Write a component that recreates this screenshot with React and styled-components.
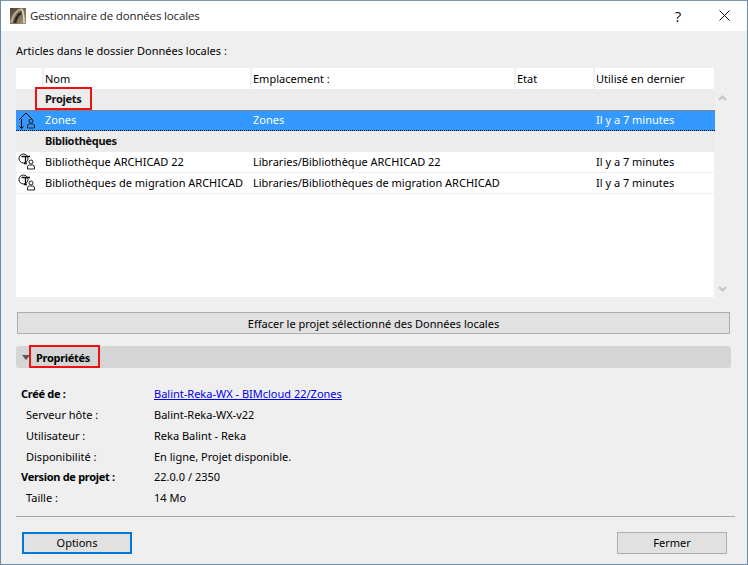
import React from 'react';
import styled, { createGlobalStyle } from 'styled-components';

const Global = createGlobalStyle`
  html, body { margin: 0; padding: 0; background: #efefef; }
  * { box-sizing: border-box; }
  svg { display: block; }
`;
const Win = styled.div`
  width: 748px; height: 565px; display: flex; flex-direction: column; position: relative; overflow: hidden;
  background: #efefef; border: 1px solid #6d8aa5; border-width: 0 1px 1px 1px;
  font-family: Tahoma, "Noto Sans", "DejaVu Sans", sans-serif; font-size: 11px; color: #000;
`;
const TitleBar = styled.div`
  height: 31px; flex: none; background: #fff; display: flex; align-items: center; padding: 0 0 1px 9px;
  border-top: 1px solid #7a95ad;
`;
const TitleText = styled.span`
  font-family: "Open Sans", sans-serif; font-size: 11.5px; margin-left: 4px; color: #222; flex: 1; letter-spacing: -0.15px; padding-bottom: 1px;
`;
const TitleBtn = styled.div`
  width: 46px; height: 28px; display: flex; align-items: center; justify-content: center; font-size: 15px;
  font-family: "Open Sans", sans-serif; color: #111;
`;
const Body = styled.div`
  flex: 1; display: flex; flex-direction: column; padding: 0 15px 0 15px; min-height: 0;
`;
const Caption = styled.div`
  height: 37px; flex: none; line-height: 40px;
`;
const TableRow = styled.div`display: flex; flex: none; height: 229px;`;
const Table = styled.div`width: 698px; background: #fff; display: flex; flex-direction: column; position: relative;`;
const cols = '26px 208px 264px 79px 1fr';
const Head = styled.div`
  height: 21px; display: grid; grid-template-columns: ${cols}; flex: none;
`;
const HeadCell = styled.div`
  border-left: ${p => (p.$first ? 'none' : '2px solid #efefef')}; padding-left: 1px; line-height: 21px; white-space: nowrap;
`;
const Group = styled.div`
  height: 21px; background: #ececec; font-weight: 700; padding-left: 29px; line-height: 19px; flex: none;
  color: #111; letter-spacing: -0.3px;
`;
const Row = styled.div`
  height: 21px; display: grid; grid-template-columns: ${cols}; flex: none; line-height: 20px; white-space: nowrap;
  background: ${p => (p.$sel ? '#3399ff' : '#fff')}; color: ${p => (p.$sel ? '#fff' : '#000')};
  border-bottom: ${p => (p.$sel ? '1px dotted #000' : '1px solid #efefef')};
  border-top: ${p => (p.$sel ? '1px dotted #c8641e' : 'none')};
  ${p => p.$sel && 'width: 699px; line-height: 17px;'}
`;
const IconCell = styled.div`padding: 1px 0 0 2px; height: 20px; ${p => p.$sel && 'margin-top: -1px;'}`;
const Cell = styled.div`padding-left: 3px; overflow: hidden;`;
const Scroll = styled.div`
  width: 16px; display: flex; flex-direction: column; justify-content: space-between; align-items: center; padding: 27px 0 5px;
`;
const Btn = styled.button`
  display: block; height: ${p => p.$h || 22}px; width: ${p => p.$w || 110}px; padding: 0; font: inherit; color: #000;
  background: #e1e1e1; border: ${p => (p.$focus ? '2px solid #0078d7' : '1px solid #adadad')};
`;
const WideBtn = styled(Btn)`margin: 15px 0 0 1px; font-weight: 400;`;
const PropBar = styled.div`
  margin-top: 12px; height: 22px; width: 715px; background: #d5d5d5; border-radius: 3px; display: flex; align-items: center;
  padding-left: 6px; font-weight: 700; flex: none; gap: 6px; color: #000; letter-spacing: -0.3px;
`;
const Arrow = styled.span`
  width: 0; height: 0; border-left: 4px solid transparent; border-right: 4px solid transparent; border-top: 5px solid #555;
`;
const Props = styled.div`
  margin-top: 15.3px; display: grid; grid-template-columns: 133px 1fr; grid-auto-rows: 20.8px; padding-left: 5px; align-items: center; flex: none;
`;
const PLabel = styled.div`
  padding-left: ${p => (p.$bold ? 0 : 5)}px; font-weight: ${p => (p.$bold ? 700 : 400)}; white-space: nowrap;
  letter-spacing: ${p => (p.$bold ? '-0.3px' : '0')};
`;
const PValue = styled.div`white-space: nowrap;`;
const PLink = styled.a`color: #0000ee; text-decoration: underline;`;
const Sep = styled.div`height: 1px; background: #a6a6a6; width: 719px; margin-top: 7.7px; flex: none;`;
const Footer = styled.div`
  display: flex; justify-content: space-between; padding: 15px 4px 0 6px; width: 715px;
`;
const RedBox = styled.div`
  position: absolute; border: 2px solid #ee1111; pointer-events: none;
  left: ${p => p.$x}px; top: ${p => p.$y}px; width: ${p => p.$w}px; height: ${p => p.$h}px;
`;

const Logo = () => (
  <svg width="16" height="16" viewBox="0 0 16 16">
    <defs>
      <linearGradient id="lg" x1="0" y1="0" x2="1" y2="1">
        <stop offset="0" stopColor="#4a4030" /><stop offset="1" stopColor="#a89a7c" />
      </linearGradient>
    </defs>
    <rect width="16" height="16" fill="url(#lg)" />
    <path d="M1 15C3 7 7 2 12 1" stroke="#b5aa8e" strokeWidth="2.2" fill="none" />
    <path d="M12 1C14 6 14 11 14 15" stroke="#e2dbc6" strokeWidth="1.5" fill="none" />
    <path d="M5 15C6 10 8 7 11 5" stroke="#2e271c" strokeWidth="2.5" fill="none" />
  </svg>
);
const Person = ({ dy = 0 }) => (
  <g stroke="#222" strokeWidth="1" fill="none" transform={`translate(0 ${dy})`}>
    <circle cx="13" cy="9.5" r="2" />
    <path d="M9.5 16.5v-2a2 2 0 0 1 2-2h3a2 2 0 0 1 2 2v2z" />
  </g>
);
const ProjectIcon = () => (
  <svg width="22" height="19" viewBox="0 0 22 19">
    <g stroke="#000" strokeWidth="1" fill="none">
      <path d="M1 9L8 2L14 8" />
      <path d="M3.5 8V17.5M1.5 15.5L3.5 17.5L5.5 15.5" />
    </g>
    <Person dy={0.5} />
  </svg>
);
const LibIcon = () => (
  <svg width="22" height="19" viewBox="0 0 22 19">
    <g stroke="#111" fill="none">
      <circle cx="5.5" cy="5.5" r="4.5" strokeWidth="1" />
      <path d="M3.5 3.5H12M7.5 3.5V10M6 10.5H9" strokeWidth="1.3" />
    </g>
    <Person dy={-0.5} />
  </svg>
);
const Chev = ({ up }) => (
  <svg width="9" height="6" viewBox="0 0 9 6">
    <path d={up ? 'M1 5L4.5 1.5L8 5' : 'M1 1L4.5 4.5L8 1'} stroke="#c4c4c4" strokeWidth="2" fill="none" />
  </svg>
);

const props = [
  ['Créé de :', true, 'link'],
  ['Serveur hôte :', false, 'Balint-Reka-WX-v22'],
  ['Utilisateur :', false, 'Reka Balint - Reka'],
  ['Disponibilité :', false, 'En ligne, Projet disponible.'],
  ['Version de projet :', true, '22.0.0 / 2350'],
  ['Taille :', false, '14 Mo'],
];

export default function App() {
  return (
    <Win>
      <Global />
      <TitleBar>
        <Logo />
        <TitleText>Gestionnaire de données locales</TitleText>
        <TitleBtn>?</TitleBtn>
        <TitleBtn>
          <svg width="11" height="11" viewBox="0 0 11 11"><path d="M.5.5l10 10M10.5.5l-10 10" stroke="#111" fill="none" /></svg>
        </TitleBtn>
      </TitleBar>
      <Body>
        <Caption>Articles dans le dossier Données locales :</Caption>
        <TableRow>
          <Table>
            <Head>
              <HeadCell $first />
              <HeadCell>Nom</HeadCell>
              <HeadCell>Emplacement :</HeadCell>
              <HeadCell>Etat</HeadCell>
              <HeadCell>Utilisé en dernier</HeadCell>
            </Head>
            <Group>Projets</Group>
            <Row $sel>
              <IconCell $sel><ProjectIcon /></IconCell><Cell>Zones</Cell><Cell>Zones</Cell><Cell /><Cell>Il y a 7 minutes</Cell>
            </Row>
            <Group>Bibliothèques</Group>
            <Row>
              <IconCell><LibIcon /></IconCell><Cell>Bibliothèque ARCHICAD 22</Cell><Cell>Libraries/Bibliothèque ARCHICAD 22</Cell><Cell /><Cell>Il y a 7 minutes</Cell>
            </Row>
            <Row>
              <IconCell><LibIcon /></IconCell><Cell>Bibliothèques de migration ARCHICAD</Cell><Cell>Libraries/Bibliothèques de migration ARCHICAD</Cell><Cell /><Cell>Il y a 7 minutes</Cell>
            </Row>
          </Table>
          <Scroll><Chev up /><Chev /></Scroll>
        </TableRow>
        <WideBtn $w={713} $h={22}>Effacer le projet sélectionné des Données locales</WideBtn>
        <PropBar><Arrow />Propriétés</PropBar>
        <Props>
          {props.map(([l, b, v]) => (
            <React.Fragment key={l}>
              <PLabel $bold={b}>{l}</PLabel>
              <PValue>{v === 'link' ? <PLink href="#">Balint-Reka-WX - BIMcloud 22/Zones</PLink> : v}</PValue>
            </React.Fragment>
          ))}
        </Props>
        <Sep />
        <Footer>
          <Btn $focus>Options</Btn>
          <Btn>Fermer</Btn>
        </Footer>
      </Body>
      <RedBox $x={34} $y={87} $w={57} $h={23} />
      <RedBox $x={28} $y={345} $w={71} $h={23} />
    </Win>
  );
}
